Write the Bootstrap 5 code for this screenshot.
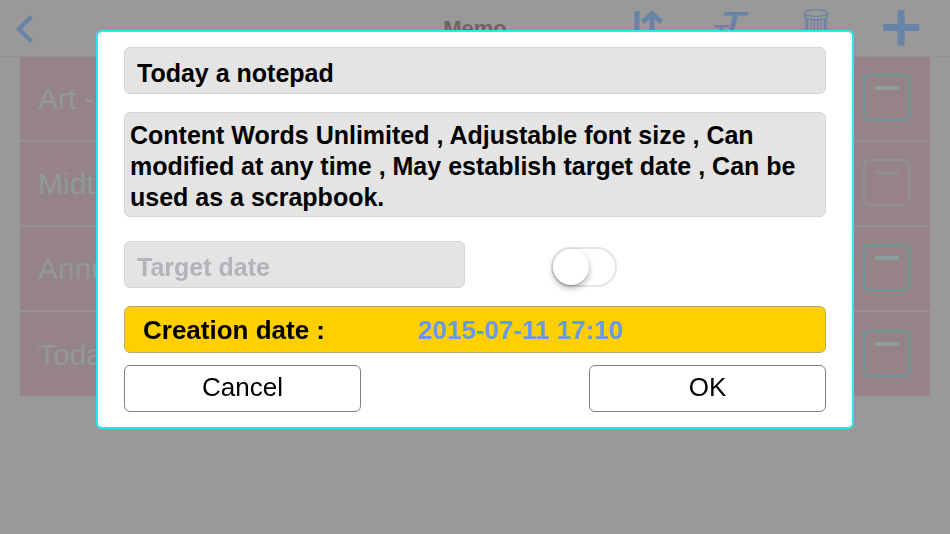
<!DOCTYPE html>
<html lang="en">
<head>
<meta charset="utf-8">
<meta name="viewport" content="width=device-width, initial-scale=1">
<title>Memo</title>
<link href="https://cdn.jsdelivr.net/npm/bootstrap@5.3.0/dist/css/bootstrap.min.css" rel="stylesheet">
<style>
  body { background: #999; font-family: "Liberation Sans", Arial, sans-serif; min-height: 100vh; }
  .topbar { display: grid; grid-template-columns: 1fr auto 1fr; align-items: center; height: 57px; border-bottom: 1px solid #929292; }
  .topbar h1 { font-size: 22px; color: #666; padding-top: 2px; }
  .topbar .btn { color: #6784a6; width: 48px; height: 48px; }
  .topbar svg { display: block; }
  .tools { gap: 37px; padding-right: 25px; }
  .memo-list { margin: 0 20px; }
  .memo-row { background: #958388; height: 85px; border-bottom: 2px solid #929292; padding: 0 20px 2px 18px; font-size: 30px; color: #929a97; }
  .memo-row span { padding-top: 2px; }
  .memo-row:last-child { height: 84px; border-bottom: 0; }
  .flag-btn { width: 47px; height: 47px; border: 2px solid #639895; border-radius: 6px; background: none; padding: 10px 0 0; display: flex; justify-content: center; align-items: flex-start; }
  .flag-btn span { width: 24px; height: 4px; padding: 0; background: #8b9e9d; }
  .flag-btn.off { border-color: #8f9090; }
  .flag-btn.off span { background: #908d8f; }
  .memo-dialog { width: auto; max-width: none; margin: 30px 96px 0; }
  .memo-dialog .modal-content { border: 2px solid #1feeee; border-radius: 6px; padding: 15px 26px; color: #000; }
  .field { background: #e4e4e4; border: 1px solid #d6d6d6; border-radius: 6px; font-size: 25px; font-weight: 700; color: #000; }
  .field:focus { background: #e4e4e4; color: #000; }
  .field::placeholder { color: #b3b3b9; }
  .line-field { height: 47px; padding: 6px 12px 0; line-height: 40px; }
  .body-field { height: 105px; padding: 7px 5px; line-height: 31px; resize: none; overflow: hidden; margin: 18px 0 24px; }
  .target-grid { display: grid; grid-template-columns: 341fr 361fr; align-items: center; }
  .toggle { appearance: none; width: 66px; height: 40px; margin: 5px 0 0 86px; border: 2px solid #e4e4e4; border-radius: 20px; background: #fff; }
  .toggle::before { content: ""; display: block; width: 36px; height: 36px; border-radius: 50%; background: #fff; box-shadow: 0 3px 6px rgba(0,0,0,.3), 0 1px 1px rgba(0,0,0,.15); }
  .created { display: grid; grid-template-columns: 275fr 407fr; align-items: center; height: 47px; margin: 18px 0 12px; padding: 1px 0 0 18px; background: #ffcf00; border: 1px solid #b5a878; border-radius: 6px; font-size: 26px; }
  .created time { color: #6699f0; }
  .action-grid { display: grid; grid-template-columns: 237fr 228fr 237fr; }
  .action-grid .btn { height: 47px; border: 1px solid #808080; border-radius: 6px; font-size: 26px; line-height: 39px; padding: 0 0 3px; color: #000; background: #fff; }
  .action-grid .btn:last-child { grid-column: 3; }
</style>
</head>
<body>
<header class="topbar">
  <div>
    <button class="btn border-0 p-0" type="button" aria-label="Back">
      <svg width="48" height="48" viewBox="0 4 48 48" fill="none" stroke="currentColor" stroke-width="4"><path d="M31.500 16.500 19 29 31.500 41.500"/></svg>
    </button>
  </div>
  <h1 class="fw-bold m-0">Memo</h1>
  <div class="tools d-flex justify-content-end">
    <button class="btn border-0 p-0" type="button" aria-label="Sort">
      <svg width="48" height="48" viewBox="622 4 48 48" fill="none" stroke="currentColor" stroke-width="5"><path d="M637 11v33M627.500 35l9.500 9.500M652 46V14M642.500 22 652 13.500l9.500 8.500"/></svg>
    </button>
    <button class="btn border-0 p-0" type="button" aria-label="Text size">
      <svg width="48" height="48" viewBox="707 4 48 48" fill="currentColor"><path d="M724.500 12h24l-1 3.500h-9.500L731 42h-5l7-26.500h-9.500zM714.500 25h15l-.5 2.500h-5.500L719.500 42h-3l3.500-14.500h-6z"/></svg>
    </button>
    <button class="btn border-0 p-0" type="button" aria-label="Delete">
      <svg width="48" height="48" viewBox="792 4 48 48" fill="none" stroke="currentColor" stroke-width="1.300"><ellipse cx="816" cy="13" rx="11.300" ry="3.300"/><path d="M804.700 13v3.500c0 4 22.600 4 22.600 0V13M805.800 18.500V44h20.400V18.500M807.500 19v25M811 20v24M814.300 20v24M817.700 20v24M821 20v24M824.500 19v25"/></svg>
    </button>
    <button class="btn border-0 p-0" type="button" aria-label="Add">
      <svg width="48" height="48" viewBox="877 4 48 48" fill="none" stroke="currentColor" stroke-width="7"><path d="M883 27.500h36M901 10v35.500"/></svg>
    </button>
  </div>
</header>

<main class="memo-list">
  <div class="memo-row d-flex align-items-center justify-content-between"><span>Art -</span><button class="flag-btn" type="button" aria-label="Flag"><span></span></button></div>
  <div class="memo-row d-flex align-items-center justify-content-between"><span>Midt</span><button class="flag-btn off" type="button" aria-label="Flag"><span></span></button></div>
  <div class="memo-row d-flex align-items-center justify-content-between"><span>Annu</span><button class="flag-btn" type="button" aria-label="Flag"><span></span></button></div>
  <div class="memo-row d-flex align-items-center justify-content-between"><span>Toda</span><button class="flag-btn" type="button" aria-label="Flag"><span></span></button></div>
</main>

<div class="modal d-block" tabindex="-1" role="dialog" aria-label="Edit memo">
  <div class="modal-dialog memo-dialog">
    <form class="modal-content">
      <input class="form-control field line-field" type="text" aria-label="Title" value="Today a notepad">
      <textarea class="form-control field body-field" aria-label="Content" spellcheck="false">Content Words Unlimited , Adjustable font size , Can modified at any time , May establish target date , Can be used as a scrapbook.</textarea>
      <div class="target-grid">
        <input class="form-control field line-field" type="text" aria-label="Target date" placeholder="Target date">
        <input class="toggle" type="checkbox" role="switch" aria-label="Use target date">
      </div>
      <div class="created fw-bold"><span>Creation date :</span><time datetime="2015-07-11T17:10">2015-07-11 17:10</time></div>
      <div class="action-grid">
        <button class="btn" type="button">Cancel</button>
        <button class="btn" type="button">OK</button>
      </div>
    </form>
  </div>
</div>
<script src="https://cdn.jsdelivr.net/npm/bootstrap@5.3.0/dist/js/bootstrap.bundle.min.js"></script>
</body>
</html>
